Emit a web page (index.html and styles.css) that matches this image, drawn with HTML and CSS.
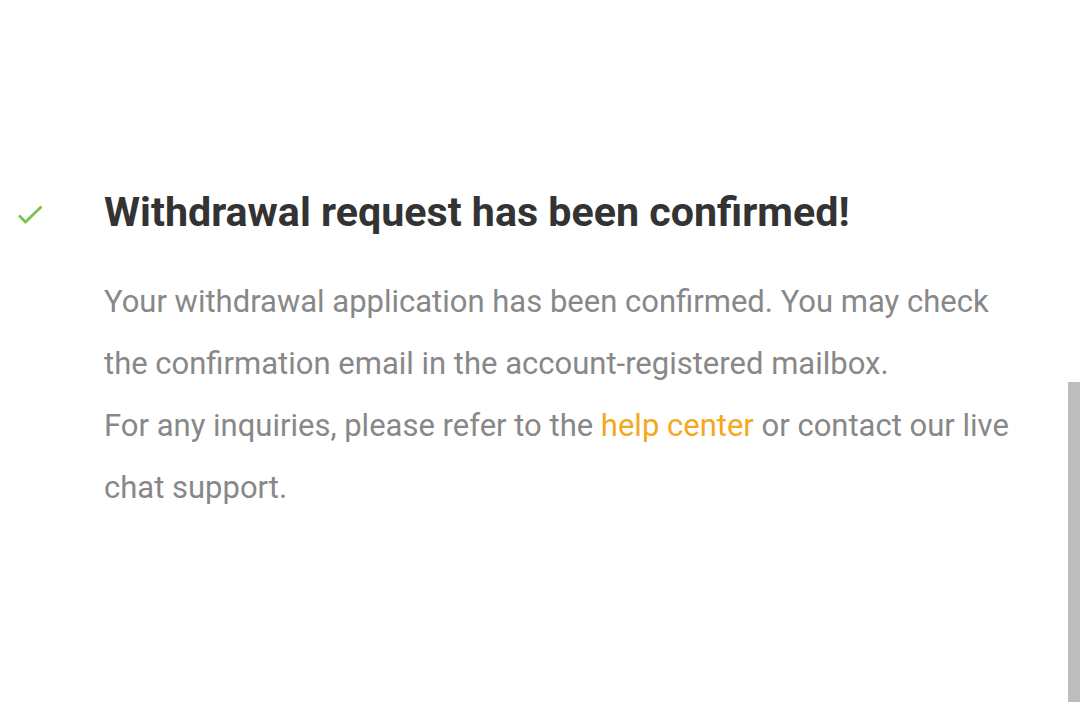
FILE: index.html
```html
<!DOCTYPE html>
<html lang="en">
<head>
<meta charset="utf-8">
<title>Withdrawal confirmed</title>
<link rel="stylesheet" href="styles.css">
</head>
<body>
<div class="page">
  <div class="result">
    <div class="result-icon">
      <svg width="28" height="22" viewBox="0 0 28 22" aria-hidden="true">
        <path d="M2 10.5 L8.5 17 L24.5 1.5" fill="none" stroke="#7cc24a" stroke-width="2.8"/>
      </svg>
    </div>
    <div class="result-body">
      <h1 class="result-title">Withdrawal request has been confirmed!</h1>
      <p class="result-text">Your withdrawal application has been confirmed. You may check the confirmation email in the account-registered mailbox.<br>For any inquiries, please refer to the <a class="link" href="#">help center</a> or contact our live chat support.</p>
    </div>
  </div>
  <div class="scrollbar"></div>
</div>
</body>
</html>
```

FILE: styles.css
```css
html, body {
  margin: 0;
  padding: 0;
  background: #ffffff;
}
body {
  font-family: Roboto, "Liberation Sans", sans-serif;
  width: 1080px;
  height: 702px;
  overflow: hidden;
}
.page {
  position: relative;
  width: 1080px;
  height: 702px;
}
.result {
  display: flex;
  padding: 185px 60px 0 17px;
}
.result-icon {
  width: 87px;
  flex: none;
  padding-top: 20px;
}
.result-icon svg {
  display: block;
}
.result-body {
  flex: 1;
}
.result-title {
  margin: 0;
  font-size: 41.2px;
  line-height: 54px;
  font-weight: 700;
  color: #333333;
}
.result-text {
  margin: 32px 0 0;
  font-size: 31px;
  line-height: 62px;
  color: #888888;
}
.link {
  color: #f5a81c;
  text-decoration: none;
}
.scrollbar {
  position: absolute;
  right: 0;
  top: 382px;
  width: 12px;
  height: 320px;
  background: #bdbdbd;
}
```
